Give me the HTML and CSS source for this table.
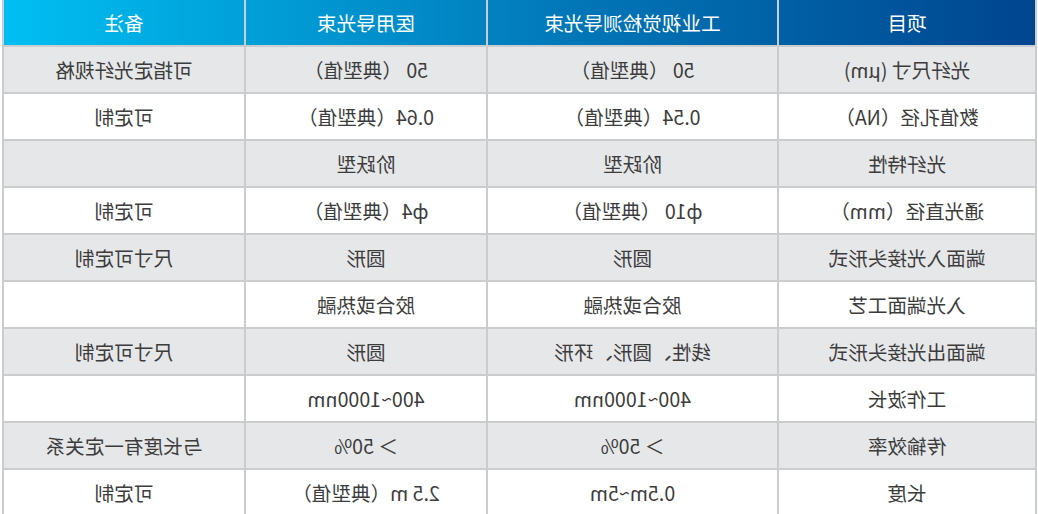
FILE: index.html
```html
<!DOCTYPE html>
<html lang="zh-CN">
<head>
<meta charset="utf-8">
<title>导光束参数</title>
<link rel="stylesheet" href="styles.css">
</head>
<body>
<div class="spec">
  <div class="row head">
    <div class="cell">项目</div>
    <div class="cell">工业视觉检测导光束</div>
    <div class="cell">医用导光束</div>
    <div class="cell">备注</div>
  </div>
  <div class="row alt">
    <div class="cell">光纤尺寸 (μm)</div>
    <div class="cell">50 （典型值）</div>
    <div class="cell">50 （典型值）</div>
    <div class="cell">可指定光纤规格</div>
  </div>
  <div class="row">
    <div class="cell">数值孔径（NA）</div>
    <div class="cell">0.54（典型值）</div>
    <div class="cell">0.64（典型值）</div>
    <div class="cell">可定制</div>
  </div>
  <div class="row alt">
    <div class="cell">光纤特性</div>
    <div class="cell">阶跃型</div>
    <div class="cell">阶跃型</div>
    <div class="cell"></div>
  </div>
  <div class="row">
    <div class="cell">通光直径（mm）</div>
    <div class="cell">ф10 （典型值）</div>
    <div class="cell">ф4（典型值）</div>
    <div class="cell">可定制</div>
  </div>
  <div class="row alt">
    <div class="cell">端面入光接头形式</div>
    <div class="cell">圆形</div>
    <div class="cell">圆形</div>
    <div class="cell">尺寸可定制</div>
  </div>
  <div class="row">
    <div class="cell">入光端面工艺</div>
    <div class="cell">胶合或热融</div>
    <div class="cell">胶合或热融</div>
    <div class="cell"></div>
  </div>
  <div class="row alt">
    <div class="cell">端面出光接头形式</div>
    <div class="cell">线性、圆形、环形</div>
    <div class="cell">圆形</div>
    <div class="cell">尺寸可定制</div>
  </div>
  <div class="row">
    <div class="cell">工作波长</div>
    <div class="cell">400~1000nm</div>
    <div class="cell">400~1000nm</div>
    <div class="cell"></div>
  </div>
  <div class="row alt">
    <div class="cell">传输效率</div>
    <div class="cell">＞ 50%</div>
    <div class="cell">＞ 50%</div>
    <div class="cell">与长度有一定关系</div>
  </div>
  <div class="row">
    <div class="cell">长度</div>
    <div class="cell">0.5m~5m</div>
    <div class="cell">2.5 m（典型值）</div>
    <div class="cell">可定制</div>
  </div>
</div>
</body>
</html>
```
FILE: styles.css
```css
html, body {
  margin: 0;
  padding: 0;
  background: #ffffff;
}

body {
  font-family: "Noto Sans CJK SC", "Noto Sans", sans-serif;
  font-size: 19.6px;
  color: #3c3c3c;
  overflow: hidden;
}

.spec {
  width: 1035px;
  margin-left: 2px;
  box-sizing: border-box;
  border-left: 2px solid #cbcccd;
  display: flex;
  flex-direction: column;
  transform: scaleX(-1);
}

.row {
  display: grid;
  grid-template-columns: 258px 291px 242px 242px;
  height: 47px;
  box-sizing: border-box;
  border-bottom: 2px solid #cbcccd;
  background: #ffffff;
}

.row.alt {
  background: #e6e7e9;
}

.row.head {
  background: linear-gradient(to right, #00458f 0%, #0277b8 45%, #00bff2 100%);
  color: #ffffff;
}

.cell {
  box-sizing: border-box;
  border-right: 2px solid #cbcccd;
  display: flex;
  align-items: center;
  justify-content: center;
  white-space: nowrap;
  line-height: 1;
}
```
